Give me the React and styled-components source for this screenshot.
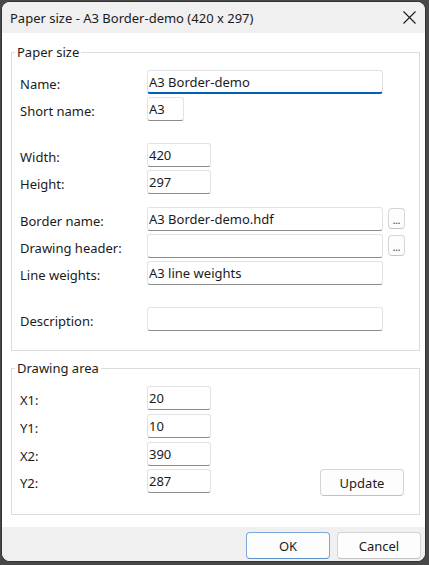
import styled, { createGlobalStyle } from "styled-components";

const GlobalStyle = createGlobalStyle`
  html, body {
    margin: 0;
    padding: 0;
  }
  body {
    background: #484848;
    font-family: "Segoe UI", "Noto Sans", sans-serif;
  }
`;

const Window = styled.div`
  margin: 2px;
  width: 423px;
  height: 559px;
  display: flex;
  flex-direction: column;
  background: #ffffff;
  border-radius: 8px;
  overflow: hidden;
  box-shadow: 0 0 0 1px rgba(0, 0, 0, 0.3);
  font-size: 13px;
  color: #1b1b1b;
`;

const TitleBar = styled.div`
  flex: none;
  height: 31px;
  display: flex;
  align-items: center;
  justify-content: space-between;
  padding-left: 8px;
  background: #f0f0f0;
`;

const Title = styled.div`
  font-size: 13px;
  white-space: nowrap;
`;

const CloseButton = styled.button`
  width: 32px;
  height: 31px;
  display: flex;
  align-items: center;
  justify-content: center;
  padding: 0;
  border: none;
  background: transparent;
  color: #1b1b1b;
`;

const Content = styled.div`
  flex: 1;
  display: flex;
  flex-direction: column;
  gap: 9px;
  padding: 11px 5px 11px 9px;
`;

const GroupBox = styled.fieldset`
  margin: 0;
  min-width: 0;
  border: 1px solid #dcdcdc;
  padding: 10px ${(p) => p.$padRight}px ${(p) => p.$padBottom}px 8px;
`;

const Legend = styled.legend`
  padding: 0 2px;
  margin-left: -5px;
  line-height: 16px;
  font-size: 13px;
`;

const Row = styled.div`
  display: flex;
  align-items: flex-start;
  margin-top: ${(p) => p.$gap}px;
`;

const Label = styled.label`
  flex: none;
  width: 127px;
  height: 24px;
  line-height: 28px;
  white-space: nowrap;
`;

const TextInput = styled.input`
  box-sizing: border-box;
  width: ${(p) => p.$w}px;
  height: 24px;
  margin: 0;
  padding: 0 0 0 1px;
  border: 1px solid #e3e3e3;
  border-bottom: ${(p) => (p.$focused ? "2px solid #005fb8" : "1px solid #8c8c8c")};
  border-radius: 3px;
  background: #ffffff;
  font: inherit;
  color: inherit;
  outline: none;
`;

const BrowseButton = styled.button`
  box-sizing: border-box;
  width: 17px;
  height: 21px;
  margin: 1px 0 0 5px;
  padding: 4px 0 0;
  border: 1px solid #d6d6d6;
  border-bottom-color: #c4c4c4;
  border-radius: 4px;
  background: #fdfdfd;
  font-family: inherit;
  font-size: 9px;
  font-weight: bold;
  line-height: 1;
  color: #4a5a7a;
`;

const PushButton = styled.button`
  box-sizing: border-box;
  width: ${(p) => p.$w}px;
  height: 27px;
  margin: 0;
  padding: 0;
  border: 1px solid ${(p) => (p.$default ? "#7aa8d8" : "#d4d4d4")};
  border-bottom-color: ${(p) => (p.$default ? "#5d93cc" : "#c2c2c2")};
  border-radius: 4px;
  background: #fdfdfd;
  font-family: inherit;
  font-size: 13px;
  color: #1b1b1b;
`;

const UpdateButton = styled(PushButton)`
  margin-left: auto;
`;

const Footer = styled.div`
  flex: none;
  height: 34px;
  display: flex;
  align-items: flex-start;
  justify-content: flex-end;
  gap: 7px;
  padding: 5px 4px 0 0;
  box-sizing: border-box;
  background: #f0f0f0;
`;

const Field = ({ label, value = "", w, gap = 3, focused, browse }) => (
  <Row $gap={gap}>
    <Label>{label}</Label>
    <TextInput $w={w} $focused={focused} defaultValue={value} />
    {browse && <BrowseButton>...</BrowseButton>}
  </Row>
);

export default function App() {
  return (
    <>
      <GlobalStyle />
      <Window>
        <TitleBar>
          <Title>Paper size - A3 Border-demo (420 x 297)</Title>
          <CloseButton aria-label="Close">
            <svg width="13" height="13" viewBox="0 0 13 13">
              <path d="M0.5 0.5 L12.5 12.5 M12.5 0.5 L0.5 12.5" stroke="currentColor" strokeWidth="1.1" fill="none" />
            </svg>
          </CloseButton>
        </TitleBar>
        <Content>
          <GroupBox $padRight={13} $padBottom={19}>
            <Legend>Paper size</Legend>
            <Field label="Name:" value="A3 Border-demo" w={236} gap={0} focused />
            <Field label="Short name:" value="A3" w={37} />
            <Field label="Width:" value="420" w={64} gap={22} />
            <Field label="Height:" value="297" w={64} />
            <Field label="Border name:" value="A3 Border-demo.hdf" w={236} gap={13} browse />
            <Field label="Drawing header:" w={236} browse />
            <Field label="Line weights:" value="A3 line weights" w={236} />
            <Field label="Description:" w={236} gap={22} />
          </GroupBox>
          <GroupBox $padRight={15} $padBottom={18}>
            <Legend>Drawing area</Legend>
            <Field label="X1:" value="20" w={64} gap={0} />
            <Field label="Y1:" value="10" w={64} gap={4} />
            <Field label="X2:" value="390" w={64} gap={4} />
            <Row $gap={3}>
              <Label>Y2:</Label>
              <TextInput $w={64} defaultValue="287" />
              <UpdateButton $w={84}>Update</UpdateButton>
            </Row>
          </GroupBox>
        </Content>
        <Footer>
          <PushButton $w={84} $default>OK</PushButton>
          <PushButton $w={84}>Cancel</PushButton>
        </Footer>
      </Window>
    </>
  );
}
